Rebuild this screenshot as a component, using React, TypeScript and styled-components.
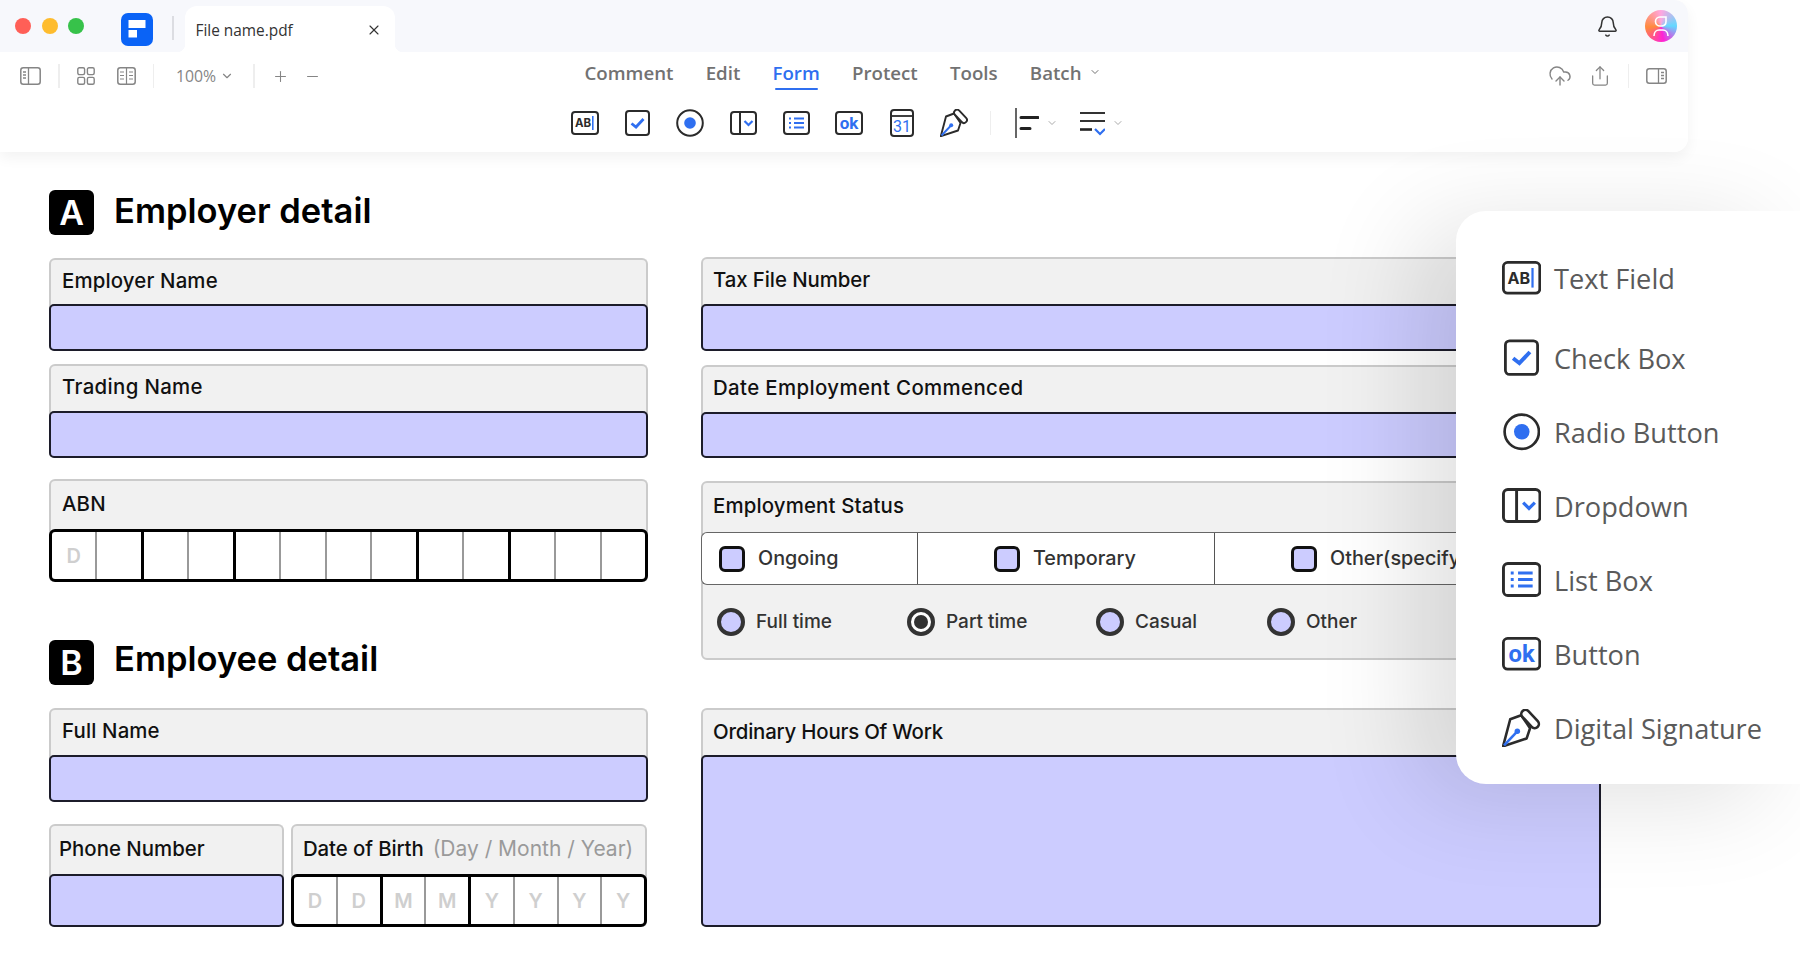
import React from "react";
import styled, { createGlobalStyle } from "styled-components";
import { Bell, ChevronDown, CloudUpload, Minus, Plus, Share, X } from "lucide-react";

const Global = createGlobalStyle`
  html, body { margin: 0; padding: 0; background: #fff; }
  * { box-sizing: border-box; }
`;

const DARK = "#2b2b2b";
const BLUE = "#2f6ff0";
const GRAY = "#858585";

const Page = styled.div`
  position: relative;
  width: 1800px;
  height: 960px;
  overflow: hidden;
  background: #fff;
  font-family: "Inter", "Liberation Sans", sans-serif;
`;

const Chrome = styled.header`
  width: 1688px;
  height: 152px;
  display: flex;
  flex-direction: column;
  border-radius: 0 14px 14px 0;
  background: #fff;
  box-shadow: 0 6px 14px rgba(0, 0, 0, 0.05);
`;

const TitleBar = styled.div`
  height: 52px;
  display: flex;
  align-items: center;
  padding: 0 11px 0 15px;
  background: #f7f8fc;
  border-radius: 0 14px 0 0;
`;

const Lights = styled.div`
  display: flex;
  gap: 10.5px;
`;

const Light = styled.span<{ $c: string }>`
  width: 16px;
  height: 16px;
  border-radius: 50%;
  background: ${(p) => p.$c};
`;

const Logo = styled.svg`
  width: 32px;
  height: 33px;
  margin-left: 37px;
  margin-top: 7px;
`;

const TitleRule = styled.span`
  width: 1.5px;
  height: 24px;
  margin: 4px 11px 0 19px;
  background: #dcdde2;
`;

const Tab = styled.div`
  position: relative;
  align-self: flex-end;
  width: 210px;
  height: 46px;
  display: flex;
  align-items: center;
  justify-content: space-between;
  padding: 2px 13px 0 11px;
  background: #fff;
  border-radius: 12px 12px 0 0;
  color: #333;
  font: 400 15.4px "Open Sans", sans-serif;
  &::before,
  &::after {
    content: "";
    position: absolute;
    bottom: 0;
    width: 8px;
    height: 8px;
  }
  &::before {
    left: -8px;
    background: radial-gradient(circle at 0 0, #f7f8fc 8px, #fff 8.5px);
  }
  &::after {
    right: -8px;
    background: radial-gradient(circle at 100% 0, #f7f8fc 8px, #fff 8.5px);
  }
`;

const TitleEnd = styled.div`
  margin-left: auto;
  display: flex;
  align-items: center;
  gap: 26px;
  color: #333;
`;

const Avatar = styled.div`
  width: 32px;
  height: 32px;
  display: flex;
  align-items: center;
  justify-content: center;
  border-radius: 50%;
  background: conic-gradient(from 0deg, #ffa6e0, #63d8ff 90deg, #ff22d6 170deg, #ff8a3c 265deg, #ffa6e0);
`;

const ToolArea = styled.div`
  flex: 1;
  display: flex;
  align-items: flex-start;
  background: #fff;
  border-radius: 0 0 14px 0;
`;

const LeftTools = styled.div`
  width: 570px;
  height: 48px;
  flex: none;
  display: flex;
  align-items: center;
  gap: 17px;
  padding-left: 20px;
`;

const ToolGroup = styled.div<{ $gap?: number; $pl?: number; $pr?: number }>`
  display: flex;
  align-items: center;
  gap: ${(p) => p.$gap ?? 0}px;
  padding: 0 ${(p) => p.$pr ?? 0}px 0 ${(p) => p.$pl ?? 0}px;
  color: ${GRAY};
`;

const Rule = styled.span<{ $h?: number; $ml?: number }>`
  width: 1.5px;
  height: ${(p) => p.$h ?? 24}px;
  margin-left: ${(p) => p.$ml ?? 0}px;
  background: #eeeeee;
  flex: none;
`;

const Zoom = styled.span`
  font: 400 15.8px "Open Sans", sans-serif;
  color: ${GRAY};
`;

const Center = styled.div`
  display: flex;
  flex-direction: column;
`;

const Nav = styled.nav`
  display: flex;
  gap: 32.2px;
  padding: 6px 0 0 14.5px;
  height: 40px;
`;

const NavItem = styled.a<{ $on?: boolean }>`
  position: relative;
  height: 28px;
  display: flex;
  align-items: center;
  gap: 7px;
  font: 600 18.7px "Open Sans", sans-serif;
  color: ${(p) => (p.$on ? BLUE : "#727272")};
  &::after {
    content: "";
    display: ${(p) => (p.$on ? "block" : "none")};
    position: absolute;
    left: 2px;
    right: 2px;
    bottom: -4px;
    height: 2.5px;
    border-radius: 2px;
    background: ${BLUE};
  }
`;

const FormTools = styled.div`
  display: flex;
  align-items: center;
  height: 46px;
  margin: 8px 0 0 -11.500px;
`;

const IconSlot = styled.span`
  width: 52.8px;
  flex: none;
  display: flex;
  justify-content: center;
`;

const FormExtra = styled.div<{ $left: number }>`
  display: flex;
  align-items: center;
  gap: 7px;
  margin-left: ${(p) => p.$left}px;
  color: #aaa;
`;

const RightTools = styled.div`
  margin-left: auto;
  height: 48px;
  display: flex;
  align-items: center;
  gap: 17px;
  padding-right: 21px;
  color: ${GRAY};
`;

const Sheet = styled.main`
  display: grid;
  grid-template-columns: 599px 900px;
  column-gap: 53px;
  padding: 38px 0 0 49px;
`;

const Column = styled.div`
  display: flex;
  flex-direction: column;
`;

const RightColumn = styled(Column)`
  padding-top: 67px;
`;

const Heading = styled.div<{ $top?: number }>`
  display: flex;
  align-items: center;
  gap: 20px;
  height: 45px;
  margin-top: ${(p) => p.$top ?? 0}px;
  margin-bottom: 23px;
`;

const Badge = styled.span`
  width: 45px;
  height: 45px;
  display: flex;
  align-items: center;
  justify-content: center;
  border-radius: 6px;
  background: #000;
  color: #fff;
  font: 600 34px "Inter", sans-serif;
`;

const Title = styled.h2<{ $lift: number }>`
  margin: 0 0 ${(p) => p.$lift}px;
  color: #000;
  font: 600 34.5px "Inter", sans-serif;
`;

const Field = styled.section<{ $h: number; $after?: number }>`
  height: ${(p) => p.$h}px;
  margin-bottom: ${(p) => p.$after ?? 0}px;
  display: flex;
  flex-direction: column;
  flex: none;
  background: #f1f1f1;
  border: 2px solid #cbcbcb;
  border-bottom: none;
  border-radius: 6px 6px 5px 5px;
`;

const Label = styled.div<{ $h?: number; $pad?: number; $ls?: number; $up?: number; $gap?: number }>`
  height: ${(p) => p.$h ?? 45}px;
  flex: none;
  display: flex;
  align-items: center;
  gap: ${(p) => p.$gap ?? 11}px;
  padding: 0 0 ${(p) => p.$up ?? 3}px ${(p) => p.$pad ?? 11}px;
  font: 500 20.4px "Inter", sans-serif;
  letter-spacing: ${(p) => p.$ls ?? 0.15}px;
  color: #111;
  white-space: nowrap;
`;

const Hint = styled.span`
  color: #9a9a9a;
  font-size: 21px;
  letter-spacing: 0;
  font-weight: 400;
`;

const Input = styled.div`
  flex: 1;
  margin: 0 -2px;
  background: #ccccff;
  border: 2px solid #1c1c2a;
  border-radius: 5px;
`;

const Comb = styled.div`
  flex: 1;
  margin: 0 -2px;
  display: flex;
  background: #fff;
  border: 3px solid #000;
  border-radius: 6px;
  overflow: hidden;
`;

const Cell = styled.span<{ $strong?: boolean }>`
  flex: 1;
  display: flex;
  align-items: center;
  justify-content: center;
  border-left: ${(p) => (p.$strong ? "3px solid #000" : "2px solid #999")};
  color: #cfcfcf;
  font: 600 20px "Inter", sans-serif;
  &:first-child {
    border-left: none;
  }
`;

const SplitRow = styled.div`
  display: grid;
  grid-template-columns: 235px 356px;
  gap: 7px;
  height: 103px;
`;

const StatusPanel = styled.section`
  height: 179px;
  margin-bottom: 48px;
  display: flex;
  flex-direction: column;
  background: #f1f1f1;
  border: 2px solid #cbcbcb;
  border-radius: 6px;
`;

const StatusRow = styled.div`
  height: 53px;
  margin: 0 -2px;
  display: grid;
  grid-template-columns: 215px 297px 1fr;
  background: #fff;
  border-top: 1.5px solid #666;
  border-bottom: 1.5px solid #666;
  border-left: 1.5px solid #666;
  border-radius: 6px 0 0 6px;
`;

const StatusCell = styled.div<{ $pad: number }>`
  display: flex;
  align-items: center;
  gap: 13px;
  padding-left: ${(p) => p.$pad}px;
  border-left: 1.5px solid #555;
  font: 500 19.8px "Inter", sans-serif;
  color: #333;
  white-space: nowrap;
  &:first-child {
    border-left: none;
  }
`;

const StatusText = styled.span`
  margin-top: -2px;
`;

const Tick = styled.span`
  width: 26px;
  height: 26px;
  flex: none;
  background: #ccccff;
  border: 3.500px solid #111;
  border-radius: 6px;
`;

const RadioRow = styled.div`
  flex: 1;
  display: grid;
  grid-template-columns: 190px 189px 171px 1fr;
  align-items: center;
  padding-left: 14px;
`;

const RadioItem = styled.label`
  display: flex;
  align-items: center;
  gap: 11px;
  font: 500 19px "Inter", sans-serif;
  color: #333;
`;

const RadioDot = styled.span<{ $on?: boolean }>`
  position: relative;
  width: 28px;
  height: 28px;
  flex: none;
  border-radius: 50%;
  border: 4px solid #333;
  background: ${(p) => (p.$on ? "#fff" : "#ccccff")};
  &::after {
    content: "";
    display: ${(p) => (p.$on ? "block" : "none")};
    position: absolute;
    inset: 3px;
    border-radius: 50%;
    background: #333;
  }
`;

const Popup = styled.aside`
  position: absolute;
  left: 1456px;
  top: 211px;
  right: 0;
  height: 573px;
  padding: 30px 0 0 46px;
  display: flex;
  flex-direction: column;
  background: #fff;
  border-radius: 30px 0 0 30px;
  box-shadow: -40px 15px 100px rgba(0, 0, 0, 0.12);
`;

const PopItem = styled.div<{ $top: number }>`
  height: 74px;
  flex: none;
  margin-top: ${(p) => p.$top}px;
  display: flex;
  align-items: center;
`;

const PopIcon = styled.span`
  width: 39px;
  margin-right: 13px;
  flex: none;
  display: flex;
  justify-content: center;
  align-items: center;
`;

const PopText = styled.span`
  font: 400 27.2px "Open Sans", sans-serif;
  color: #5a5a5a;
  white-space: nowrap;
`;

const Svg: React.FC<{ w: number; h: number; vw: number; vh: number; children: React.ReactNode }> = ({ w, h, vw, vh, children }) => (
  <svg width={w} height={h} viewBox={`0 0 ${vw} ${vh}`} fill="none" style={{ flex: "none", display: "block" }}>
    {children}
  </svg>
);

const TextIcon = ({ k = 1 }: { k?: number }) => (
  <Svg w={28 * k} h={24 * k} vw={28} vh={24}>
    <rect x="1" y="1" width="26" height="22" rx="3" stroke={DARK} strokeWidth="2" />
    <text x="4" y="16.200" fontFamily="Inter, sans-serif" fontSize="11.500" fontWeight="700" fill={DARK}>AB</text>
    <path d="M21.8 5v14" stroke={BLUE} strokeWidth="1.6" />
  </Svg>
);
const CheckIcon = ({ k = 1 }: { k?: number }) => (
  <Svg w={25 * k} h={28 * k} vw={25} vh={28}>
    <rect x="1" y="2" width="23" height="24" rx="3" stroke={DARK} strokeWidth="2" />
    <path d="M6.500 14.500l4.500 3.500 7.500-8" stroke={BLUE} strokeWidth="2.800" />
  </Svg>
);
const RadioIcon = ({ k = 1 }: { k?: number }) => (
  <Svg w={28 * k} h={28 * k} vw={28} vh={28}>
    <circle cx="14" cy="14" r="12.8" stroke={DARK} strokeWidth="2" />
    <circle cx="14" cy="14" r="5.8" fill={BLUE} />
  </Svg>
);
const DropIcon = ({ k = 1 }: { k?: number }) => (
  <Svg w={27 * k} h={24 * k} vw={27} vh={24}>
    <rect x="1" y="1" width="25" height="22" rx="3" stroke={DARK} strokeWidth="2" />
    <path d="M10 1v22" stroke={DARK} strokeWidth="2" />
    <path d="M14.5 10l4 4 4-4" stroke={BLUE} strokeWidth="2.200" />
  </Svg>
);
const ListIcon = ({ k = 1 }: { k?: number }) => (
  <Svg w={27 * k} h={24 * k} vw={27} vh={24}>
    <rect x="1" y="1" width="25" height="22" rx="3" stroke={DARK} strokeWidth="2" />
    <path d="M6 7.5h2M6 12h2M6 16.5h2M11 7.5h10M11 12h10M11 16.5h10" stroke={BLUE} strokeWidth="2" />
  </Svg>
);
const OkIcon = ({ k = 1 }: { k?: number }) => (
  <Svg w={28 * k} h={24 * k} vw={28} vh={24}>
    <rect x="1" y="1" width="26" height="22" rx="3" stroke={DARK} strokeWidth="2" />
    <text x="14" y="18" textAnchor="middle" fontFamily="Roboto, sans-serif" fontSize="17" fontWeight="700" fill={BLUE}>ok</text>
  </Svg>
);
const CalIcon = () => (
  <Svg w={24} h={28} vw={24} vh={28}>
    <rect x="1" y="1" width="22" height="26" rx="3" stroke={DARK} strokeWidth="2" />
    <path d="M1 7h22" stroke={DARK} strokeWidth="1.8" />
    <text x="12" y="23" textAnchor="middle" fontFamily="Roboto, sans-serif" fontSize="16" fill={BLUE}>31</text>
  </Svg>
);
const PenIcon = ({ k = 1 }: { k?: number }) => (
  <Svg w={28 * k} h={28 * k} vw={28} vh={28}>
    <path d="M0.800 27.200L6 7.500l8-3 6.500 9.500-2.500 7.500z" stroke={DARK} strokeWidth="1.900" strokeLinejoin="round" />
    <rect x="12.500" y="4.300" width="16" height="6" rx="3" transform="rotate(47 20.500 7.300)" stroke={DARK} strokeWidth="1.900" fill="#fff" />
    <path d="M1.500 26.500L11 16.500" stroke={BLUE} strokeWidth="1.900" />
    <circle cx="11.200" cy="16.200" r="2" fill={BLUE} />
  </Svg>
);
const AlignIcon = () => (
  <Svg w={24} h={30} vw={24} vh={30}>
    <path d="M1 0v30" stroke="#333" strokeWidth="1.500" />
    <path d="M6 9.500h17M6 20.500h9" stroke="#222" strokeWidth="3" strokeLinecap="round" />
  </Svg>
);
const SpaceIcon = () => (
  <Svg w={25} h={26} vw={25} vh={26}>
    <path d="M0 3h25M0 11h25" stroke="#333" strokeWidth="2" />
    <path d="M0 19.500h12" stroke="#222" strokeWidth="2.600" />
    <path d="M15 19l5 5 5-5" stroke={BLUE} strokeWidth="2.200" />
  </Svg>
);
const SideLeft = () => (
  <Svg w={21} h={18} vw={21} vh={18}>
    <rect x="0.800" y="0.800" width="19.400" height="16.400" rx="2.500" stroke={GRAY} strokeWidth="1.500" />
    <path d="M8.500 1v16M3 5h3M3 8h3M3 11h3" stroke={GRAY} strokeWidth="1.300" />
  </Svg>
);
const SideRight = () => (
  <Svg w={21} h={16} vw={21} vh={16}>
    <rect x="0.800" y="0.800" width="19.400" height="14.400" rx="2.500" stroke={GRAY} strokeWidth="1.500" />
    <path d="M12.500 1v14M15 4.500h3M15 7.500h3M15 10.500h3" stroke={GRAY} strokeWidth="1.300" />
  </Svg>
);
const GridIcon = () => (
  <Svg w={18} h={18} vw={18} vh={18}>
    {[0.8, 10.4].map((x) =>
      [0.8, 10.4].map((y) => <rect key={`${x}${y}`} x={x} y={y} width="6.800" height="6.800" rx="1.500" stroke={GRAY} strokeWidth="1.400" />)
    )}
  </Svg>
);
const BookIcon = () => (
  <Svg w={19} h={18} vw={19} vh={18}>
    <rect x="0.800" y="0.800" width="17.400" height="16.400" rx="2.500" stroke={GRAY} strokeWidth="1.500" />
    <path d="M9.500 1v16M3 5h4M3 8.500h4M3 12h4M12 5h4M12 8.500h4M12 12h4" stroke={GRAY} strokeWidth="1.200" />
  </Svg>
);
const PersonIcon = () => (
  <Svg w={20} h={22} vw={20} vh={22}>
    <path d="M15 2H9a4.500 4.500 0 0 0 0 9h2a4.500 4.500 0 0 0 4-4.500z" stroke="#fff" strokeWidth="1.600" />
    <path d="M3 21c0-4 2.500-6 5-6h4c2.500 0 5 2 5 6" stroke="#fff" strokeWidth="1.600" />
  </Svg>
);

const LabeledInput: React.FC<{ label: string; h: number; after: number; pad?: number; ls?: number; lh?: number; up?: number }> = ({ label, h, after, pad, ls, lh, up }) => (
  <Field $h={h} $after={after}>
    <Label $pad={pad} $ls={ls} $h={lh} $up={up}>{label}</Label>
    <Input />
  </Field>
);

const abn = [0, 0, 1, 0, 1, 0, 0, 0, 1, 0, 1, 0, 0];
const dob: [string, number][] = [["D", 0], ["D", 0], ["M", 1], ["M", 0], ["Y", 1], ["Y", 0], ["Y", 0], ["Y", 0]];

const popItems: [React.ReactNode, string, number][] = [
  [<TextIcon k={1.4} />, "Text Field", 0],
  [<CheckIcon k={1.4} />, "Check Box", 6],
  [<RadioIcon k={1.34} />, "Radio Button", 0],
  [<DropIcon k={1.46} />, "Dropdown", 0],
  [<ListIcon k={1.46} />, "List Box", 0],
  [<OkIcon k={1.4} />, "Button", 0],
  [<PenIcon k={1.37} />, "Digital Signature", 0],
];

export default function App() {
  return (
    <Page>
      <Global />
      <Chrome>
        <TitleBar>
          <Lights>
            <Light $c="#ff5f57" />
            <Light $c="#febc2e" />
            <Light $c="#37c24a" />
          </Lights>
          <Logo viewBox="0 0 32 33">
            <rect width="32" height="33" rx="7" fill="#0a63f6" />
            <path d="M7.500 7h17v8h-17z" fill="#fff" />
            <path d="M7.500 17h8.500v7.500h-8.500z" fill="#fff" />
          </Logo>
          <TitleRule />
          <Tab>
            File name.pdf
            <X size={16} strokeWidth={1.7} />
          </Tab>
          <TitleEnd>
            <Bell size={23} strokeWidth={1.6} />
            <Avatar>
              <PersonIcon />
            </Avatar>
          </TitleEnd>
        </TitleBar>
        <ToolArea>
          <LeftTools>
            <ToolGroup>
              <SideLeft />
            </ToolGroup>
            <Rule />
            <ToolGroup $gap={22}>
              <GridIcon />
              <BookIcon />
            </ToolGroup>
            <Rule />
            <ToolGroup $gap={4} $pl={5} $pr={2}>
              <Zoom>100%</Zoom>
              <ChevronDown size={14} />
            </ToolGroup>
            <Rule />
            <ToolGroup $gap={15}>
              <Plus size={17} strokeWidth={1.5} />
              <Minus size={17} strokeWidth={1.5} />
            </ToolGroup>
          </LeftTools>
          <Center>
            <Nav>
              <NavItem>Comment</NavItem>
              <NavItem>Edit</NavItem>
              <NavItem $on>Form</NavItem>
              <NavItem>Protect</NavItem>
              <NavItem>Tools</NavItem>
              <NavItem>
                Batch
                <ChevronDown size={12} />
              </NavItem>
            </Nav>
            <FormTools>
              <IconSlot><TextIcon /></IconSlot>
              <IconSlot><CheckIcon /></IconSlot>
              <IconSlot><RadioIcon /></IconSlot>
              <IconSlot><DropIcon /></IconSlot>
              <IconSlot><ListIcon /></IconSlot>
              <IconSlot><OkIcon /></IconSlot>
              <IconSlot><CalIcon /></IconSlot>
              <IconSlot><PenIcon /></IconSlot>
              <Rule $h={24} $ml={9} />
              <FormExtra $left={24}>
                <AlignIcon />
                <ChevronDown size={12} />
              </FormExtra>
              <FormExtra $left={22}>
                <SpaceIcon />
                <ChevronDown size={12} />
              </FormExtra>
            </FormTools>
          </Center>
          <RightTools>
            <CloudUpload size={24} strokeWidth={1.4} />
            <Share size={22} strokeWidth={1.4} />
            <Rule />
            <SideRight />
          </RightTools>
        </ToolArea>
      </Chrome>
      <Sheet>
        <Column>
          <Heading>
            <Badge>A</Badge>
            <Title $lift={4}>Employer detail</Title>
          </Heading>
          <LabeledInput label="Employer Name" h={93} after={13} lh={44} />
          <LabeledInput label="Trading Name" h={94} after={21} ls={0.35} up={4} />
          <Field $h={103}>
            <Label $h={48}>ABN</Label>
            <Comb>
              {abn.map((s, i) => (
                <Cell key={i} $strong={!!s}>{i === 0 ? "D" : ""}</Cell>
              ))}
            </Comb>
          </Field>
          <Heading $top={58}>
            <Badge>B</Badge>
            <Title $lift={9}>Employee detail</Title>
          </Heading>
          <LabeledInput label="Full Name" h={94} after={22} up={4} />
          <SplitRow>
            <Field $h={103}>
              <Label $h={48} $pad={8} $ls={0}>Phone Number</Label>
              <Input />
            </Field>
            <Field $h={103}>
              <Label $h={48} $pad={10} $ls={-0.1} $gap={9}>Date of Birth <Hint>(Day / Month / Year)</Hint></Label>
              <Comb>
                {dob.map(([c, s], i) => (
                  <Cell key={i} $strong={!!s}>{c}</Cell>
                ))}
              </Comb>
            </Field>
          </SplitRow>
        </Column>
        <RightColumn>
          <LabeledInput label="Tax File Number" h={94} after={14} pad={10} ls={-0.08} up={5} />
          <LabeledInput label="Date Employment Commenced" h={93} after={23} pad={10} ls={0.38} up={5} />
          <StatusPanel>
            <Label $h={49} $pad={10} $up={5}>Employment Status</Label>
            <StatusRow>
              <StatusCell $pad={17}><Tick /><StatusText>Ongoing</StatusText></StatusCell>
              <StatusCell $pad={76}><Tick /><StatusText>Temporary</StatusText></StatusCell>
              <StatusCell $pad={76}><Tick /><StatusText>Other(specify)</StatusText></StatusCell>
            </StatusRow>
            <RadioRow>
              <RadioItem><RadioDot />Full time</RadioItem>
              <RadioItem><RadioDot $on />Part time</RadioItem>
              <RadioItem><RadioDot />Casual</RadioItem>
              <RadioItem><RadioDot />Other</RadioItem>
            </RadioRow>
          </StatusPanel>
          <Field $h={219}>
            <Label $pad={10} $ls={-0.2}>Ordinary Hours Of Work</Label>
            <Input />
          </Field>
        </RightColumn>
      </Sheet>
      <Popup>
        {popItems.map(([icon, text, top]) => (
          <PopItem key={text} $top={top}>
            <PopIcon>{icon}</PopIcon>
            <PopText>{text}</PopText>
          </PopItem>
        ))}
      </Popup>
    </Page>
  );
}
